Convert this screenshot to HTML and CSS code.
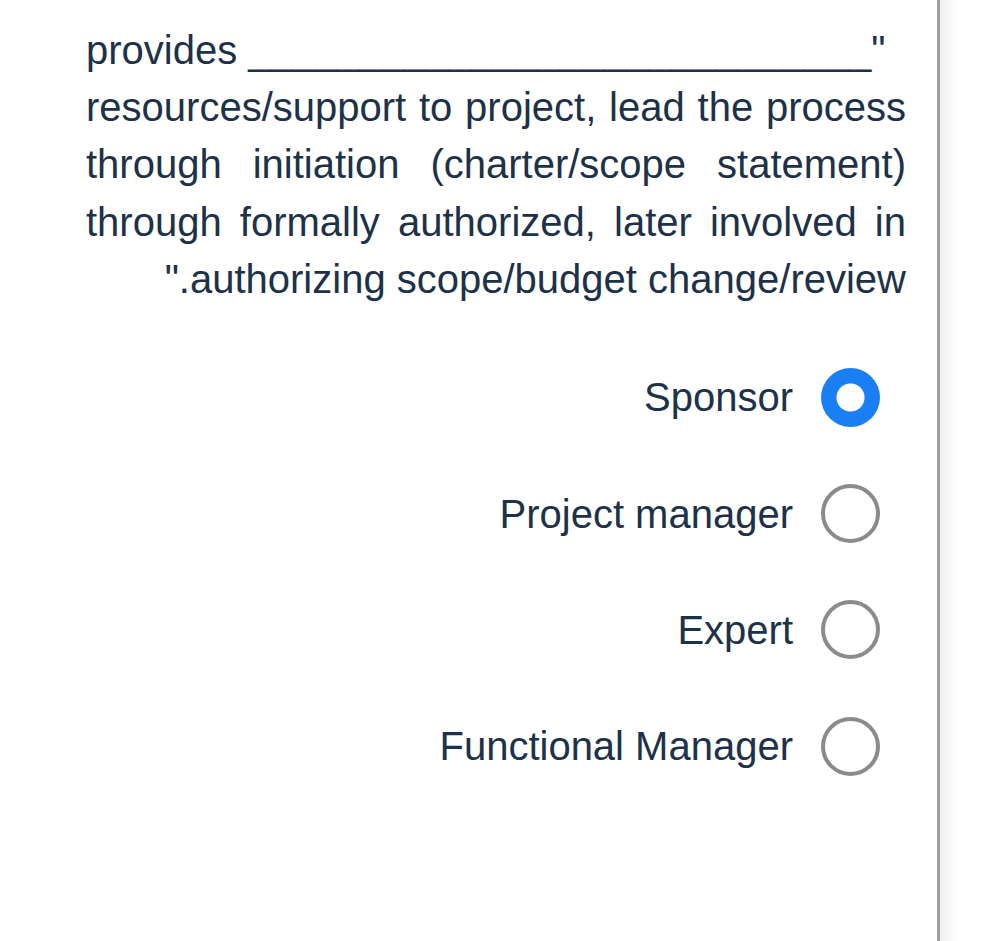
FILE: index.html
```html
<!DOCTYPE html>
<html lang="en">
<head>
<meta charset="utf-8">
<title>Question</title>
<link rel="stylesheet" href="styles.css">
</head>
<body>
<div class="page">
  <main class="main">
    <div class="question">
      <p class="lead">provides ____________________________"</p>
      <p class="body" dir="rtl">resources/support to project, lead the process through initiation (charter/scope statement) through formally authorized, later involved in authorizing scope/budget change/review."</p>
    </div>
    <ul class="options" dir="rtl">
      <li class="option"><span class="radio checked"></span><span class="label">Sponsor</span></li>
      <li class="option"><span class="radio"></span><span class="label">Project manager</span></li>
      <li class="option"><span class="radio"></span><span class="label">Expert</span></li>
      <li class="option"><span class="radio"></span><span class="label">Functional Manager</span></li>
    </ul>
  </main>
  <div class="side"></div>
</div>
</body>
</html>
```

FILE: styles.css
```css
html, body {
  margin: 0;
  padding: 0;
  background: #ffffff;
}

body {
  font-family: "Liberation Sans", Arial, sans-serif;
  color: #1d3148;
}

.page {
  display: flex;
  min-height: 941px;
}

.main {
  width: 940px;
  box-sizing: border-box;
  border-right: 3px solid #9d9d9d;
}

.side {
  flex: 1;
  background: linear-gradient(to right, #ededed 0, #f7f7f7 8px, #ffffff 18px);
}

.question {
  margin: 22px 0 0 86px;
  width: 820px;
  font-size: 40px;
  line-height: 57.2px;
}

.question p {
  margin: 0;
}

.lead {
  text-align: left;
}

.body {
  text-align: justify;
}

.options {
  list-style: none;
  margin: 31px 0 0 0;
  padding: 0 57px 0 0;
}

.option {
  display: flex;
  align-items: center;
  gap: 28px;
  height: 116.4px;
  font-size: 40px;
}

.label {
  line-height: 46px;
}

.radio {
  flex: none;
  width: 59px;
  height: 59px;
  box-sizing: border-box;
  border: 4px solid #8b8b8b;
  border-radius: 50%;
  background: #ffffff;
}

.radio.checked {
  border: none;
  background: radial-gradient(circle, #ffffff 0 13.5px, #1a7ff5 14.5px);
}
```
